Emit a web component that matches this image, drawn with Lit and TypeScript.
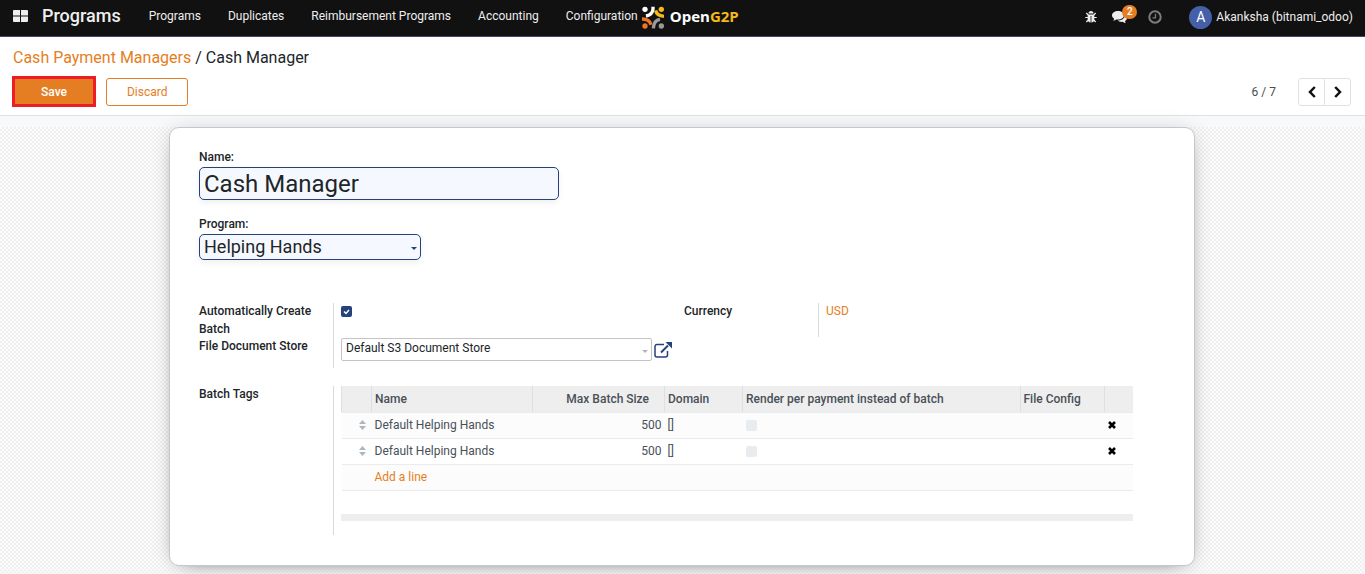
import { LitElement, html, css, svg } from "lit";
import { customElement, state } from "lit/decorators.js";

interface BatchTag {
  name: string;
  size: number;
  domain: string;
}

const logo = svg`
  <svg class="logo-mark" viewBox="0 0 66 69" fill="none" stroke-width="10" aria-hidden="true">
    <g stroke="none">
      <circle cx="9" cy="10" r="8" fill="#fff"/>
      <circle cx="58" cy="10" r="8" fill="#f5b91a"/>
      <circle cx="9" cy="60" r="8" fill="#ee7623"/>
      <circle cx="58" cy="60" r="8" fill="#9a9a9a"/>
    </g>
    <path d="M33 2V9Q32 26 12 30" stroke="#fff"/>
    <path d="M41 13Q44 29 66 31" stroke="#f5b91a"/>
    <path d="M0 39Q22 39 27 56" stroke="#ee7623"/>
    <path d="M54 40Q35 43 34 67" stroke="#9a9a9a"/>
  </svg>`;

@customElement("app-root")
export class AppRoot extends LitElement {
  @state() private tags: BatchTag[] = [
    { name: "Default Helping Hands", size: 500, domain: "[]" },
    { name: "Default Helping Hands", size: 500, domain: "[]" },
  ];

  static styles = css`
    :host {
      display: flex;
      flex-direction: column;
      min-height: 100vh;
      background: #f8f9fb;
      color: #212529;
      font: 12px/18px Roboto, sans-serif;
    }
    * { box-sizing: border-box; }
    a { color: #e57e22; text-decoration: none; }
    button, input, select { font: inherit; color: inherit; margin: 0; }
    button { cursor: pointer; }
    svg { display: block; }

    .navbar {
      display: flex;
      align-items: center;
      height: 37px;
      padding: 0 12px 4px 13px;
      background: #111;
      border-bottom: 1px solid #4a4270;
      color: #eee;
    }
    .navbar a { color: #eee; }
    .apps { display: flex; padding: 0; border: 0; background: none; }
    .apps svg { width: 15px; height: 12px; }
    .brand { margin: 0 28px 0 14px; font-size: 18px; font-weight: 500; }
    .menu { display: flex; gap: 27px; }
    .logo { display: flex; align-items: center; gap: 6px; margin-left: 4px; padding-top: 2px; }
    .logo-mark { width: 22px; height: 23px; }
    .logo-name { padding-bottom: 2px; font: 700 15px/18px "Open Sans", sans-serif; color: #fff; }
    .logo-name span { color: #f5b91a; }
    .tray { display: flex; align-items: center; margin-left: auto; padding-top: 2px; }
    .tray button { display: flex; position: relative; padding: 0; border: 0; background: none; color: #eee; }
    .bug svg { width: 12px; height: 12px; }
    .chat { margin-left: 15px; }
    .chat svg { width: 15px; height: 13px; }
    .clock { margin-left: 21px; }
    .clock svg { width: 14px; height: 14px; }
    .badge {
      position: absolute;
      left: 10px;
      top: -6px;
      width: 15px;
      height: 14px;
      border-radius: 7px;
      background: #e57e22;
      color: #fff;
      font-size: 10px;
      line-height: 14px;
      font-weight: 500;
      text-align: center;
    }
    .user { display: flex; align-items: center; gap: 4px; margin-left: 27px; }
    .avatar {
      width: 23px;
      height: 23px;
      border-radius: 50%;
      background: #4560a8;
      color: #fff;
      font-size: 14px;
      line-height: 23px;
      text-align: center;
    }

    .control {
      padding: 11px 14px 8px 13px;
      background: #fff;
      border-bottom: 1px solid #dee2e6;
    }
    .crumbs { font-size: 16px; line-height: 20px; }
    .bar { display: flex; align-items: center; gap: 10px; margin: 8px 0 0 -1px; }
    .btn { border: 1px solid #e57e22; border-radius: 3px; height: 28px; background: #fff; color: #e57e22; padding: 0 20px; }
    .save { height: 31px; padding: 0 26px; border: 3px solid #ee1c25; border-radius: 0; background: #e57e22; color: #fff; font-weight: 500; }
    .pager { display: flex; align-items: center; gap: 22px; margin-left: auto; color: #4c4c4c; }
    .steps { display: flex; }
    .steps button {
      display: grid;
      place-items: center;
      width: 27px;
      height: 28px;
      padding: 0;
      border: 1px solid #dee2e6;
      border-radius: 3px 0 0 3px;
      background: #fff;
      color: #111;
    }
    .steps button + button { margin-left: -1px; border-radius: 0 3px 3px 0; }

    .content { flex: 1; padding-top: 11px; }
    .canvas {
      min-height: 100%;
      padding: 0 17px 8px 16px;
      background: repeating-conic-gradient(#f0f0f0 0 25%, #fbfbfb 0 50%) 0 0 / 4px 4px;
    }
    .sheet {
      max-width: 1026px;
      margin: 0 auto;
      padding: 20px 25px 30px 29px;
      background: #fff;
      border: 1px solid #c6c6d2;
      border-radius: 10px;
      box-shadow: 0 5px 20px -15px #000, 0 0 20px rgba(0, 0, 0, 0.1);
    }
    label, .label { font-weight: 500; }
    .title-label { display: block; }
    .name-input, .program {
      display: block;
      background: #f5f9ff;
      border: 1px solid #25427a;
      border-radius: 5px;
      box-shadow: 0 3px 6px rgba(0, 0, 0, 0.06);
      padding: 0 4px;
    }
    .name-input { width: 360px; max-width: 100%; height: 33px; margin: 1px 0 15px; font-size: 24px; line-height: 31px; }
    .picker { position: relative; display: block; }
    .picker select { width: 100%; appearance: none; }
    .picker svg { position: absolute; right: 4px; top: 50%; width: 6px; height: 3px; }
    .program-picker { width: 222px; margin-top: 1px; color: #25427a; }
    .program { height: 26px; font-size: 18px; line-height: 24px; }
    .program, .store { color: #212529; }

    .groups { display: grid; grid-template-columns: 1fr 1fr; align-items: start; margin-top: 43px; }
    .group { display: grid; grid-template-columns: 134px 1fr; }
    .group .label, .group label { margin-top: -1px; padding-right: 20px; }
    .value { border-left: 1px solid #d9d9d9; padding-left: 7px; }
    .currency { min-height: 34px; }
    .currency a { display: block; margin-top: -1px; }
    .check { display: block; appearance: none; width: 11px; height: 11px; border-radius: 2px; background: #e9ecef; }
    .auto { margin-top: 3px; background: #25427a url("data:image/svg+xml,%3Csvg xmlns='http://www.w3.org/2000/svg' viewBox='0 0 11 11'%3E%3Cpath d='M3 5.5l2 2 3-3.5' fill='none' stroke='white' stroke-width='1.5'/%3E%3C/svg%3E"); }
    .store-row { display: flex; align-items: center; gap: 2px; padding-right: 12px; }
    .store-picker { flex: 1; color: #b5b5b5; }
    .store { height: 23px; padding: 0 4px 2px; line-height: 19px; border: 1px solid #c4c4c4; border-radius: 2px; background: #fff; }
    .open { display: flex; padding: 0; border: 0; background: none; color: #25427a; }
    .open svg { width: 18px; height: 16px; }
    .store-value { padding-bottom: 7px; }
    .tags { margin-top: 18px; }
    .lines { padding: 0 36px 14px 7px; }

    table { width: 100%; border-collapse: collapse; table-layout: fixed; color: #495057; }
    th, td { height: 26px; padding: 0 3px; text-align: left; border-bottom: 1px solid #e9ecef; }
    th { background: #eee; font-weight: 500; border-right: 1px solid #dfdfdf; }
    th:first-child { border-left: 1px solid #dfdfdf; }
    th:last-child { border-right: 0; }
    .col-handle { width: 30px; }
    .col-name { width: 161px; }
    .col-size { width: 132px; }
    .col-domain { width: 78px; }
    .col-file { width: 84px; }
    .col-del { width: 29px; }
    .num { text-align: right; }
    th.num { padding-right: 15px; }
    tbody tr:nth-child(odd) { background: #fcfcfc; }
    td svg { margin: 0 auto; }
    .handle svg { width: 7px; height: 10px; margin-right: 3px; }
    .del { display: block; padding: 0 1px; border: 0; background: none; color: #000; }
    .foot { height: 7px; margin-top: 23px; background: #eee; }
  `;

  private remove(i: number) {
    this.tags = this.tags.filter((_, n) => n !== i);
  }

  render() {
    return html`
      <header class="navbar">
        <button class="apps" aria-label="Applications">
          <svg viewBox="0 0 15 12" fill="#eee"><path d="M1 0h6v5.500H0V1a1 1 0 0 1 1-1zM8 0h6a1 1 0 0 1 1 1v4.500H8zM0 6.500h7V12H1a1 1 0 0 1-1-1zM8 6.500h7V11a1 1 0 0 1-1 1H8z"/></svg>
        </button>
        <a class="brand" href="#">Programs</a>
        <nav class="menu">
          ${["Programs", "Duplicates", "Reimbursement Programs", "Accounting", "Configuration"].map(
            (m) => html`<a href="#">${m}</a>`
          )}
        </nav>
        <a class="logo" href="#">${logo}<span class="logo-name">Open<span>G2P</span></span></a>
        <div class="tray">
          <button class="bug" aria-label="Debug">
            <svg viewBox="0 0 12 12" fill="#eee"><path d="M3.500 2.600a2.500 2.500 0 0 1 5 0zM2.700 3.400h6.600V8.500Q9 11.500 6.400 11.600V5H5.600v6.600Q3 11.500 2.700 8.500z"/><path d="M1.300 2l2 2M10.700 2l-2 2M.3 6.500H3M9 6.500h2.700M1.300 11l2-2M10.700 11l-2-2" stroke="#eee" stroke-width="1.200"/></svg>
          </button>
          <button class="chat" aria-label="Messages">
            <svg viewBox="0 0 15 13" fill="#eee"><path d="M6 0c3.300 0 6 1.900 6 4.300S9.300 8.600 6 8.600c-.6 0-1.100 0-1.600-.1-1 .7-2 1.100-3.300 1.200.6-.5 1-1.200 1.100-1.900C.8 7 0 5.700 0 4.300 0 1.900 2.700 0 6 0z"/><path d="M12.900 4c1.300.7 2.100 1.800 2.100 3 0 1.300-.8 2.500-2.100 3.200.1.800.6 1.400 1.100 1.900-1.300-.1-2.400-.6-3.300-1.300-2 .3-3.900-.1-5.200-1.200 3.800 0 7.400-2 7.400-5.600z"/></svg>
            <span class="badge">2</span>
          </button>
          <button class="clock" aria-label="Activities">
            <svg viewBox="0 0 14 14" fill="none" stroke="#7d7d7d"><circle cx="7" cy="7" r="5.700" stroke-width="2"/><path d="M7.500 3.800v4H4.500" stroke-width="1.300"/></svg>
          </button>
          <a class="user" href="#"><span class="avatar">A</span>Akanksha (bitnami_odoo)</a>
        </div>
      </header>

      <section class="control">
        <nav class="crumbs"><a href="#">Cash Payment Managers</a> / Cash Manager</nav>
        <div class="bar">
          <button class="btn save">Save</button>
          <button class="btn">Discard</button>
          <div class="pager">
            <span>6 / 7</span>
            <div class="steps">
              <button aria-label="Previous"><svg width="8" height="12" viewBox="0 0 8 12" fill="none" stroke="currentColor" stroke-width="2.500"><path d="M6.800 1L2 6l4.800 5"/></svg></button>
              <button aria-label="Next"><svg width="8" height="12" viewBox="0 0 8 12" fill="none" stroke="currentColor" stroke-width="2.500"><path d="M1.200 1L6 6l-4.800 5"/></svg></button>
            </div>
          </div>
        </div>
      </section>

      <main class="content">
        <div class="canvas">
          <form class="sheet">
            <label class="title-label" for="name">Name:</label>
            <input class="name-input" id="name" .value=${"Cash Manager"} />
            <label class="title-label" for="program">Program:</label>
            <div class="picker program-picker">
              <select class="program" id="program"><option>Helping Hands</option></select>
              <svg viewBox="0 0 6 3"><path d="M0 0h6L3 3z" fill="currentColor"/></svg>
            </div>

            <div class="groups">
              <div class="group">
                <label for="auto">Automatically Create Batch</label>
                <div class="value"><input class="check auto" id="auto" type="checkbox" checked /></div>
                <label for="store">File Document Store</label>
                <div class="value store-value">
                  <div class="store-row">
                    <div class="picker store-picker">
                      <select class="store" id="store"><option>Default S3 Document Store</option></select>
                      <svg viewBox="0 0 6 3"><path d="M0 0h6L3 3z" fill="currentColor"/></svg>
                    </div>
                    <button class="open" type="button" aria-label="External link">
                      <svg viewBox="0 0 18 16" fill="none" stroke="currentColor" stroke-width="1.500"><path d="M10 2.500H3a2 2 0 0 0-2 2V13a2 2 0 0 0 2 2h8.500a2 2 0 0 0 2-2V9"/><path d="M7 10.500L14 3.500" stroke-width="2"/><path d="M11.500 0H18v6.500z" fill="currentColor" stroke="none"/></svg>
                    </button>
                  </div>
                </div>
              </div>
              <div class="group">
                <span class="label">Currency</span>
                <div class="value currency"><a href="#">USD</a></div>
              </div>
            </div>

            <div class="group tags">
              <span class="label">Batch Tags</span>
              <div class="value lines">
                <table>
                  <colgroup>
                    <col class="col-handle" /><col class="col-name" /><col class="col-size" /><col class="col-domain" />
                    <col /><col class="col-file" /><col class="col-del" />
                  </colgroup>
                  <thead>
                    <tr>
                      <th></th><th>Name</th><th class="num">Max Batch Size</th><th>Domain</th>
                      <th>Render per payment instead of batch</th><th>File Config</th><th></th>
                    </tr>
                  </thead>
                  <tbody>
                    ${this.tags.map(
                      (t, i) => html`<tr>
                        <td class="handle"><svg viewBox="0 0 7 10" fill="#adb5bd"><path d="M0 4L3.500 0 7 4zM0 6h7L3.500 10z"/></svg></td>
                        <td>${t.name}</td>
                        <td class="num">${t.size}</td>
                        <td>${t.domain}</td>
                        <td><input class="check" type="checkbox" disabled aria-label="Render per payment instead of batch" /></td>
                        <td></td>
                        <td><button class="del" type="button" aria-label="Delete row" @click=${() => this.remove(i)}>
                          <svg width="8" height="8" viewBox="0 0 8 8" stroke="currentColor" stroke-width="2.600"><path d="M1 1l6 6M7 1L1 7"/></svg>
                        </button></td>
                      </tr>`
                    )}
                    <tr><td></td><td colspan="6"><a href="#">Add a line</a></td></tr>
                  </tbody>
                </table>
                <div class="foot"></div>
              </div>
            </div>
          </form>
        </div>
      </main>
    `;
  }
}
